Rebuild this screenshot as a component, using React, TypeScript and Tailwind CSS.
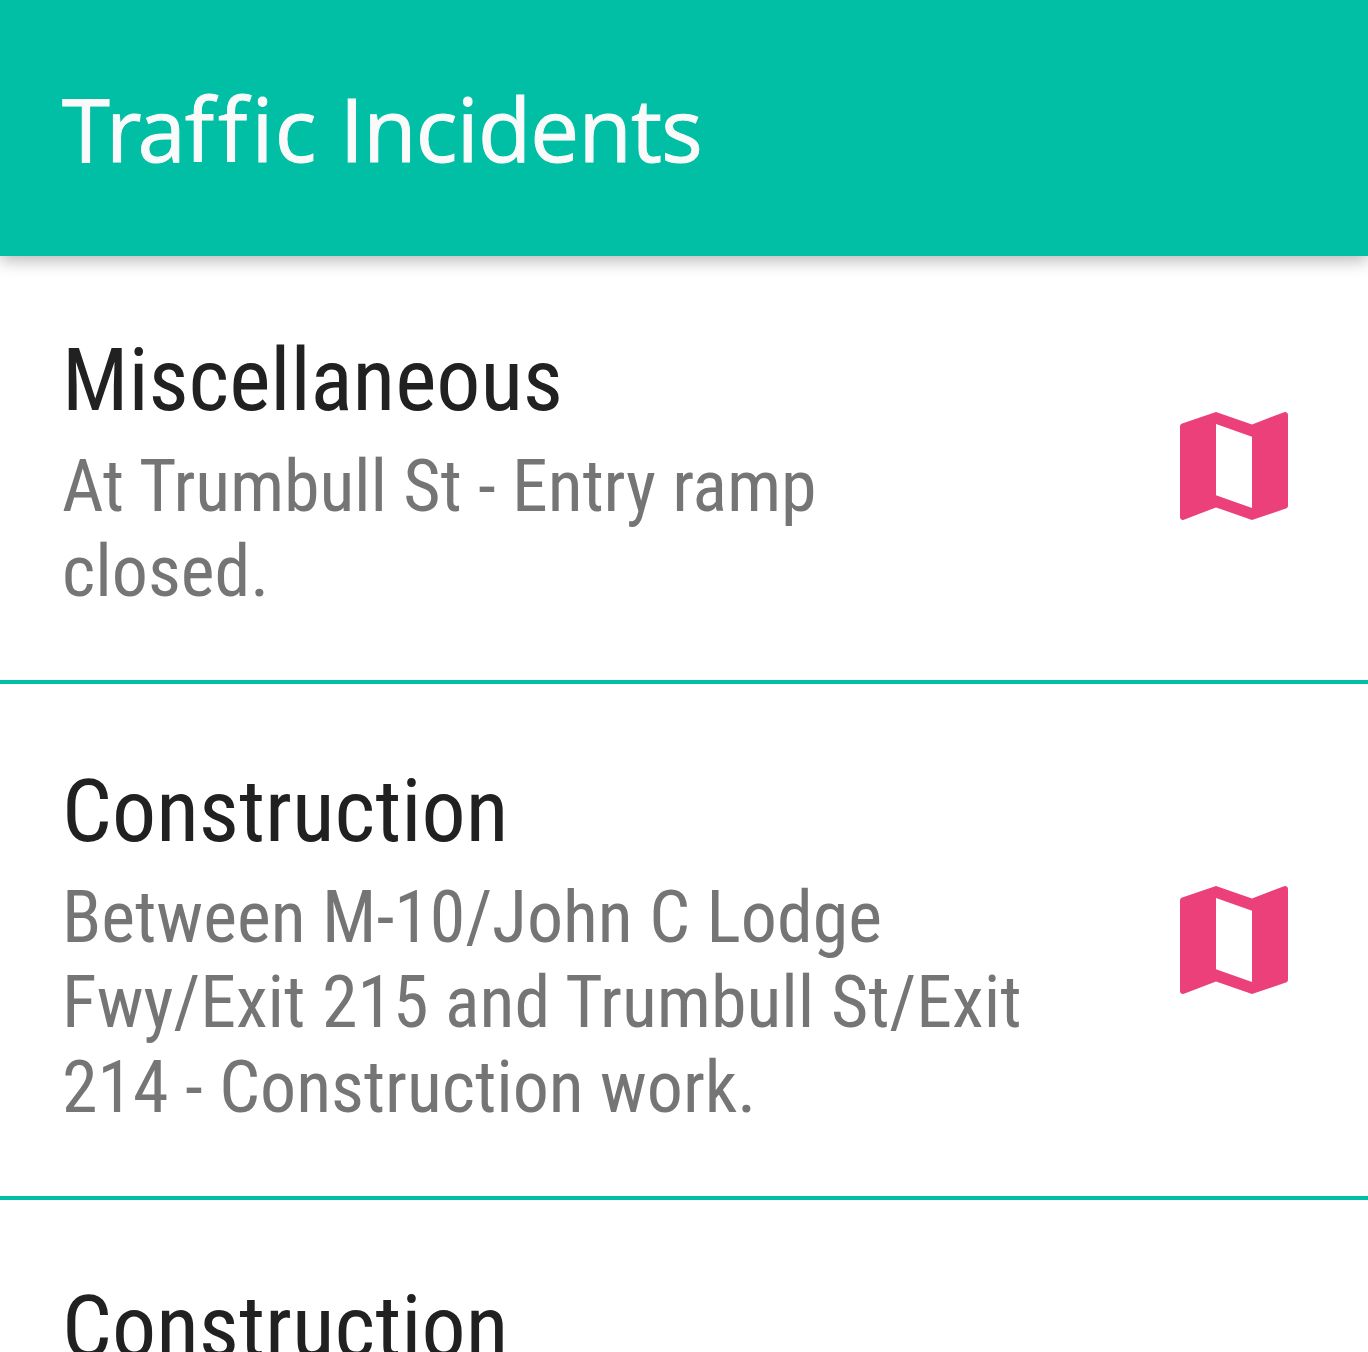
import React from 'react';

const incidents = [
  {
    title: 'Miscellaneous',
    titleStyle: 'tracking-[-0.08px]',
    lines: [{ text: 'At Trumbull St - Entry ramp', style: 'tracking-[-0.15px]' }, { text: 'closed.', style: '' }],
    box: 'h-[432px]',
    pad: 'pt-[76px]',
  },
  {
    title: 'Construction',
    titleStyle: 'tracking-[0.05px]',
    lines: [
      { text: 'Between M-10/John C Lodge', style: '' },
      { text: 'Fwy/Exit 215 and Trumbull St/Exit', style: '' },
      { text: '214 - Construction work.', style: 'tracking-[-0.04px]' },
    ],
    box: 'h-[516px]',
    pad: 'pt-[75px]',
  },
  { title: 'Construction', titleStyle: 'tracking-[0.05px]', lines: [], box: 'h-[516px]', pad: 'pt-[75px]' },
];

function MapIcon() {
  return (
    <svg viewBox="0 0 24 24" className="size-36 shrink-0 fill-[#ec407a]">
      <path d="M20.5 3l-.16.03L15 5.1 9 3 3.36 4.9c-.21.07-.36.25-.36.48V20.5c0 .28.22.5.5.5l.16-.03L9 18.9l6 2.1 5.64-1.9c.21-.07.36-.25.36-.48V3.5c0-.28-.22-.5-.5-.5zM15 19l-6-2.11V5l6 2.11V19z" />
    </svg>
  );
}

export default function App() {
  return (
    <div className="flex h-[1352px] w-[1368px] flex-col overflow-hidden bg-white font-['Roboto',sans-serif]">
      <header className="z-10 flex h-64 shrink-0 items-center bg-[#00bfa5] px-[62px] shadow-[0_4px_16px_rgba(0,0,0,0.3)]">
        <h1 className="whitespace-nowrap font-['Open_Sans',sans-serif] text-[87px] tracking-[-0.8px] text-[#fafafa] [-webkit-text-stroke:1px_#fafafa]">
          <span className="tracking-[-4px]">Tr</span>
          <span className="tracking-[-1px]">a</span>
          <span className="tracking-[4px]">ff</span>
          <span className="tracking-[1.5px]">ic</span> Incidents
        </h1>
      </header>
      <main className="-mt-1">
        {incidents.map((incident, i) => (
          <section key={i} className={`flex items-stretch justify-between border-b-4 border-[#00bfa5] px-[62px] ${incident.box}`}>
            <div className={`whitespace-nowrap [font-stretch:75%] ${incident.pad}`}>
              <h2 className={`mb-[13px] text-[88px] leading-[103px] text-[#212121] ${incident.titleStyle}`}>{incident.title}</h2>
              {incident.lines.map((line) => (
                <p key={line.text} className={`text-[72px] leading-[85px] text-[#757575] ${line.style}`}>{line.text}</p>
              ))}
            </div>
            <div className="flex items-center">
              <MapIcon />
            </div>
          </section>
        ))}
      </main>
    </div>
  );
}
